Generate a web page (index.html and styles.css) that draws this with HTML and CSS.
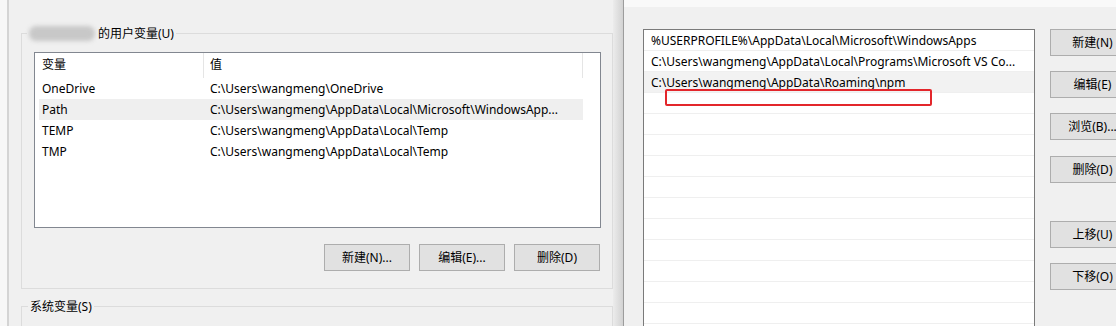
FILE: index.html
```html
<!DOCTYPE html>
<html lang="zh-CN">
<head>
<meta charset="utf-8">
<title>环境变量</title>
<link rel="stylesheet" href="styles.css">
</head>
<body>
<div class="screen">
  <div class="left">
    <div class="left-edge"></div>
    <div class="dialog">
      <fieldset class="group user-group">
        <legend class="group-label"><span class="blur-name"></span>的用户变量(U)</legend>
        <div class="listview">
          <div class="lv-header">
            <div class="lv-hcol h1">变量</div>
            <div class="lv-hcol h2">值</div>
          </div>
          <div class="lv-row"><div class="c1">OneDrive</div><div class="c2">C:\Users\wangmeng\OneDrive</div></div>
          <div class="lv-row selected"><div class="c1">Path</div><div class="c2">C:\Users\wangmeng\AppData\Local\Microsoft\WindowsApp...</div></div>
          <div class="lv-row"><div class="c1">TEMP</div><div class="c2">C:\Users\wangmeng\AppData\Local\Temp</div></div>
          <div class="lv-row"><div class="c1">TMP</div><div class="c2">C:\Users\wangmeng\AppData\Local\Temp</div></div>
        </div>
        <div class="btn-row">
          <button class="btn">新建(N)...</button>
          <button class="btn">编辑(E)...</button>
          <button class="btn">删除(D)</button>
        </div>
      </fieldset>
      <fieldset class="group sys-group">
        <legend class="group-label sys-label">系统变量(S)</legend>
      </fieldset>
    </div>
  </div>
  <div class="shadow"></div>
  <div class="right">
    <div class="top-band"></div>
    <div class="right-body">
      <div class="listbox">
        <div class="lb-row">%USERPROFILE%\AppData\Local\Microsoft\WindowsApps</div>
        <div class="lb-row">C:\Users\wangmeng\AppData\Local\Programs\Microsoft VS Co...</div>
        <div class="lb-row selected">C:\Users\wangmeng\AppData\Roaming\npm</div>
        <div class="lb-row"></div>
        <div class="lb-row"></div>
        <div class="lb-row"></div>
        <div class="lb-row"></div>
        <div class="lb-row"></div>
        <div class="lb-row"></div>
        <div class="lb-row"></div>
        <div class="lb-row"></div>
        <div class="lb-row"></div>
        <div class="lb-row"></div>
        <div class="lb-row"></div>
        <div class="red-mark"></div>
      </div>
      <div class="btn-col">
        <button class="btn rbtn">新建(N)</button>
        <button class="btn rbtn">编辑(E)</button>
        <button class="btn rbtn">浏览(B)...</button>
        <button class="btn rbtn gap-s">删除(D)</button>
        <button class="btn rbtn gap-l">上移(U)</button>
        <button class="btn rbtn">下移(O)</button>
      </div>
    </div>
  </div>
</div>
</body>
</html>
```

FILE: styles.css
```css
html, body {
  margin: 0;
  padding: 0;
}
body {
  width: 1116px;
  height: 326px;
  overflow: hidden;
  background: #f0f0f0;
  font-family: "Noto Sans", "Noto Sans CJK SC", sans-serif;
  font-size: 12px;
  color: #000;
}
.screen {
  display: flex;
  height: 326px;
  overflow: hidden;
}
.left {
  display: flex;
  height: 100%;
}
.left-edge {
  width: 7px;
  background: #f7f7f7;
}
.dialog {
  width: 592px;
  border-left: 2px solid #d4d4d4;
  padding: 25px 0 0 12px;
  background: #f0f0f0;
}
.group {
  margin: 0;
  padding: 0;
  border: 1px solid #dcdcdc;
  min-width: 0;
}
.group-label {
  margin-left: 5px;
  padding: 0 2px;
  height: 17px;
  line-height: 17px;
  display: flex;
  align-items: center;
}
.blur-name {
  display: inline-block;
  width: 66px;
  height: 15px;
  margin-right: 3px;
  border-radius: 7px;
  background: #c8c8c8;
  filter: blur(2px);
}
.listview {
  margin: 10px 11px 0 12px;
  height: 176px;
  box-sizing: border-box;
  border: 1px solid #828790;
  background: #fff;
}
.lv-header {
  display: flex;
  height: 25px;
}
.lv-hcol {
  box-sizing: border-box;
  line-height: 24px;
  border-right: 1px solid #e5e5e5;
}
.h1 {
  width: 169px;
  padding-left: 7px;
}
.h2 {
  width: 379px;
  padding-left: 6px;
}
.lv-row {
  display: flex;
  height: 21px;
  line-height: 21px;
  margin-left: 4px;
  width: 544px;
  white-space: nowrap;
}
.lv-row.selected {
  background: #efefef;
}
.c1 {
  width: 165px;
  box-sizing: border-box;
  padding-left: 3px;
}
.c2 {
  padding-left: 6px;
}
.btn-row {
  display: flex;
  justify-content: flex-end;
  gap: 9px;
  margin-top: 16px;
  padding: 0 12px 17px 0;
}
.btn {
  width: 86px;
  height: 27px;
  box-sizing: border-box;
  border: 1px solid #adadad;
  background: #e1e1e1;
  font-family: inherit;
  font-size: 12px;
  color: #000;
  padding: 0;
  line-height: 25px;
  text-align: center;
}
.sys-group {
  margin-top: 9px;
  height: 40px;
  border-bottom: none;
}
.sys-label {
  margin-left: 6px;
}
.shadow {
  width: 10px;
  height: 100%;
  background: linear-gradient(to right, #ececec, #d2d2d2);
}
.right {
  flex: 1;
  display: flex;
  flex-direction: column;
  border-left: 1px solid #9c9c9c;
  background: #f0f0f0;
  min-width: 0;
  overflow: hidden;
}
.top-band {
  flex: none;
  height: 7px;
  background: #f9f9f9;
}
.right-body {
  flex: none;
  display: flex;
  padding: 22px 0 0 19px;
  gap: 15px;
}
.listbox {
  position: relative;
  width: 392px;
  height: 320px;
  flex: none;
  box-sizing: border-box;
  border: 1px solid #7a7a7a;
  background: #fff;
}
.lb-row {
  height: 20px;
  line-height: 21px;
  border-bottom: 1px solid #efefef;
  padding-left: 7px;
  white-space: nowrap;
  overflow: hidden;
}
.lb-row.selected {
  background: #f2f2f2;
}
.red-mark {
  position: absolute;
  left: 21px;
  top: 59px;
  width: 267px;
  height: 17px;
  box-sizing: border-box;
  border: 2px solid #e3262b;
  border-radius: 2px;
}
.btn-col {
  display: flex;
  flex-direction: column;
  gap: 15px;
  flex: none;
}
.rbtn {
  width: 85px;
  flex: none;
}
.gap-s {
  margin-top: 1px;
}
.gap-l {
  margin-top: 23px;
}
```
